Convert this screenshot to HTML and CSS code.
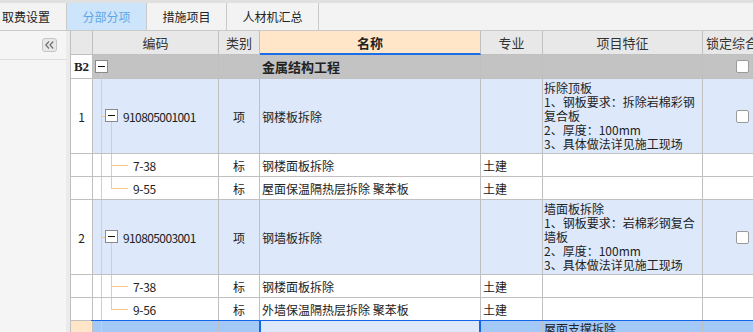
FILE: index.html
```html
<!DOCTYPE html>
<html lang="zh">
<head>
<meta charset="utf-8">
<link rel="stylesheet" href="styles.css">
</head>
<body>
<div class="topstrip"></div>
<div class="tabs">
  <div class="tab first">取费设置</div>
  <div class="tab active">分部分项</div>
  <div class="tab">措施项目</div>
  <div class="tab wide">人材机汇总</div>
</div>
<div class="main">
  <aside class="side">
    <div class="side-top">
      <span class="collapse">
        <svg width="9" height="8" viewBox="0 0 9 8"><path d="M4 0.5 L0.8 4 L4 7.5 M8.2 0.5 L5 4 L8.2 7.5" fill="none" stroke="#6f6f6f" stroke-width="1.2"/></svg>
      </span>
    </div>
  </aside>
  <div class="splitter"></div>
  <div class="grid">
    <div class="row head">
      <div class="cell hdr"></div>
      <div class="cell hdr center">编码</div>
      <div class="cell hdr center">类别</div>
      <div class="cell hdr center name-h">名称</div>
      <div class="cell hdr center">专业</div>
      <div class="cell hdr center">项目特征</div>
      <div class="cell hdr lock-h">锁定综合单价</div>
    </div>

    <div class="row group">
      <div class="cell rh b2">B2</div>
      <div class="cell code"><span class="tbox g"></span><span class="ln v1 from-box-g"></span></div>
      <div class="cell"></div>
      <div class="cell name bold">金属结构工程</div>
      <div class="cell"></div>
      <div class="cell"></div>
      <div class="cell"><span class="chk"></span></div>
    </div>

    <div class="row item">
      <div class="cell rh">1</div>
      <div class="cell code"><span class="ln v1 full"></span><span class="ln h1"></span><span class="tbox i"></span><span class="ln v2 from-box"></span><span class="codetxt">910805001001</span></div>
      <div class="cell center">项</div>
      <div class="cell name">钢楼板拆除</div>
      <div class="cell"></div>
      <div class="cell feat">拆除顶板<br>1、钢板要求：拆除岩棉彩钢<br>复合板<br>2、厚度：100mm<br>3、具体做法详见施工现场</div>
      <div class="cell"><span class="chk"></span></div>
    </div>

    <div class="row sub">
      <div class="cell rh"></div>
      <div class="cell code"><span class="ln v1 full"></span><span class="ln v2 full"></span><span class="ln h2"></span><span class="subtxt">7-38</span></div>
      <div class="cell center">标</div>
      <div class="cell name">钢楼面板拆除</div>
      <div class="cell name">土建</div>
      <div class="cell"></div>
      <div class="cell"></div>
    </div>

    <div class="row sub">
      <div class="cell rh"></div>
      <div class="cell code"><span class="ln v1 full"></span><span class="ln v2 half"></span><span class="ln h2"></span><span class="subtxt">9-55</span></div>
      <div class="cell center">标</div>
      <div class="cell name">屋面保温隔热层拆除 聚苯板</div>
      <div class="cell name">土建</div>
      <div class="cell"></div>
      <div class="cell"></div>
    </div>

    <div class="row item">
      <div class="cell rh">2</div>
      <div class="cell code"><span class="ln v1 full"></span><span class="ln h1"></span><span class="tbox i"></span><span class="ln v2 from-box"></span><span class="codetxt">910805003001</span></div>
      <div class="cell center">项</div>
      <div class="cell name">钢墙板拆除</div>
      <div class="cell"></div>
      <div class="cell feat">墙面板拆除<br>1、钢板要求：岩棉彩钢复合<br>墙板<br>2、厚度：100mm<br>3、具体做法详见施工现场</div>
      <div class="cell"><span class="chk"></span></div>
    </div>

    <div class="row sub">
      <div class="cell rh"></div>
      <div class="cell code"><span class="ln v1 full"></span><span class="ln v2 full"></span><span class="ln h2"></span><span class="subtxt">7-38</span></div>
      <div class="cell center">标</div>
      <div class="cell name">钢楼面板拆除</div>
      <div class="cell name">土建</div>
      <div class="cell"></div>
      <div class="cell"></div>
    </div>

    <div class="row sub">
      <div class="cell rh"></div>
      <div class="cell code"><span class="ln v1 full"></span><span class="ln v2 half"></span><span class="ln h2"></span><span class="subtxt">9-56</span></div>
      <div class="cell center">标</div>
      <div class="cell name">外墙保温隔热层拆除 聚苯板</div>
      <div class="cell name">土建</div>
      <div class="cell"></div>
      <div class="cell"></div>
    </div>

    <div class="row sel">
      <div class="cell rh"></div>
      <div class="cell code"><span class="ln v1 full"></span></div>
      <div class="cell"></div>
      <div class="cell name cur"></div>
      <div class="cell"></div>
      <div class="cell feat top">屋面支撑拆除</div>
      <div class="cell"></div>
    </div>
  </div>
</div>
</body>
</html>
```
FILE: styles.css
```css
html, body {
  margin: 0;
  padding: 0;
}
body {
  width: 753px;
  height: 332px;
  overflow: hidden;
  background: #f3f3f3;
  font-family: "Noto Sans CJK SC", "Noto Sans", sans-serif;
  font-size: 12px;
  color: #222;
}

.topstrip {
  height: 3px;
  background: #e0e0e0;
}

.tabs {
  display: flex;
  height: 28px;
  box-sizing: border-box;
  border-bottom: 1px solid #c9c9c9;
  background: #f3f3f3;
}
.tab {
  width: 80px;
  flex: none;
  box-sizing: border-box;
  border-right: 1px solid #c9c9c9;
  display: flex;
  align-items: center;
  justify-content: center;
  color: #222;
  font-size: 12px;
}
.tab.first {
  width: 81px;
  margin-left: -14px;
}
.tab.wide {
  width: 92px;
}
.tab.active {
  background: #cde5fa;
  color: #5ea4ea;
}

.main {
  display: flex;
  height: 301px;
}
.side {
  width: 66px;
  flex: none;
  background: #f5f5f5;
}
.side-top {
  height: 28px;
  border-bottom: 1px solid #dcdcdc;
  display: flex;
  justify-content: flex-end;
  align-items: center;
  padding-right: 9px;
}
.collapse {
  width: 15px;
  height: 14px;
  box-sizing: border-box;
  border: 1px solid #c4c4c4;
  border-radius: 3px;
  background: #e8e8e8;
  display: flex;
  align-items: center;
  justify-content: center;
}
.splitter {
  width: 4px;
  flex: none;
  background: #ebebeb;
}

.grid {
  width: 713px;
  flex: none;
  box-sizing: border-box;
  border-left: 1px solid #c0c0c0;
  background: #fff;
  overflow: hidden;
}
.row {
  display: grid;
  grid-template-columns: 22px 126px 41px 221px 62px 160px 80px;
  position: relative;
}
.row.head { height: 24px; }
.row.group { height: 24px; }
.row.item { height: 75px; }
.row.sub { height: 23px; }
.row.sel { height: 20px; }

.cell {
  box-sizing: border-box;
  border-right: 1px solid #c0c0c0;
  border-bottom: 1px solid #c0c0c0;
  display: flex;
  align-items: center;
  white-space: nowrap;
  overflow: hidden;
  position: relative;
}
.center { justify-content: center; }
.name { padding-left: 2px; }
.bold { font-weight: bold; font-size: 13px; }

.hdr {
  background: #e8e8e8;
  font-size: 13px;
  color: #333;
}
.name-h {
  background: #ffe6c8;
  font-weight: bold;
  color: #222;
  border-bottom: 2px solid #1a6fe8;
}
.lock-h {
  padding-left: 3px;
}

.rh {
  background: #fff;
  justify-content: center;
}
.b2 {
  font-weight: bold;
  font-family: "Liberation Serif", "DejaVu Serif", serif;
  font-size: 13px;
}

.group .cell:not(.rh) { background: #c3c3c3; }
.item .cell:not(.rh) { background: #dde9fb; }

.feat {
  white-space: normal;
  line-height: 14px;
  padding-left: 1px;
  font-size: 12px;
}
.feat.top {
  align-items: flex-start;
  padding-top: 1px;
}

.chk {
  width: 13px;
  height: 13px;
  box-sizing: border-box;
  margin-left: 33px;
  background: #fff;
  border: 1px solid #9a9a9a;
  border-radius: 2px;
}

/* tree */
.tbox {
  position: absolute;
  width: 13px;
  height: 13px;
  box-sizing: border-box;
  border: 1px solid #8a8a8a;
  background: #fff;
  top: 50%;
  margin-top: -7px;
}
.tbox::after {
  content: "";
  position: absolute;
  left: 2px;
  right: 2px;
  top: 5px;
  height: 1px;
  background: #111;
}
.tbox.g { left: 2px; }
.tbox.i { left: 12px; }

.ln {
  position: absolute;
  background: #f8c985;
}
.v1 { left: 8px; width: 1px; }
.v2 { left: 18px; width: 1px; }
.full { top: 0; bottom: 0; }
.half { top: 0; height: 50%; }
.from-box-g { top: calc(50% + 6px); bottom: 0; }
.from-box { top: calc(50% + 6px); bottom: 0; }
.h1 { left: 8px; width: 4px; height: 1px; top: 50%; }
.h2 { left: 18px; width: 17px; height: 1px; top: 50%; }

.codetxt {
  margin-left: 30px;
  letter-spacing: -0.6px;
}
.subtxt {
  margin-left: 40px;
  letter-spacing: -0.3px;
}

/* selected row */
.sel .cell { background: #a3c9f7; border-bottom: none; }
.sel .rh { background: #ffe6c9; }
.sel .cur {
  background: #dde9fb;
  border-left: 2px solid #1565e8;
  border-right: 2px solid #1565e8;
  margin-left: -1px;
}
.sel::before {
  content: "";
  position: absolute;
  left: 20px;
  right: 0;
  top: -1px;
  bottom: 0;
  border-top: 2px solid #1565e8;
  border-left: 2px solid #1565e8;
  pointer-events: none;
}
```
